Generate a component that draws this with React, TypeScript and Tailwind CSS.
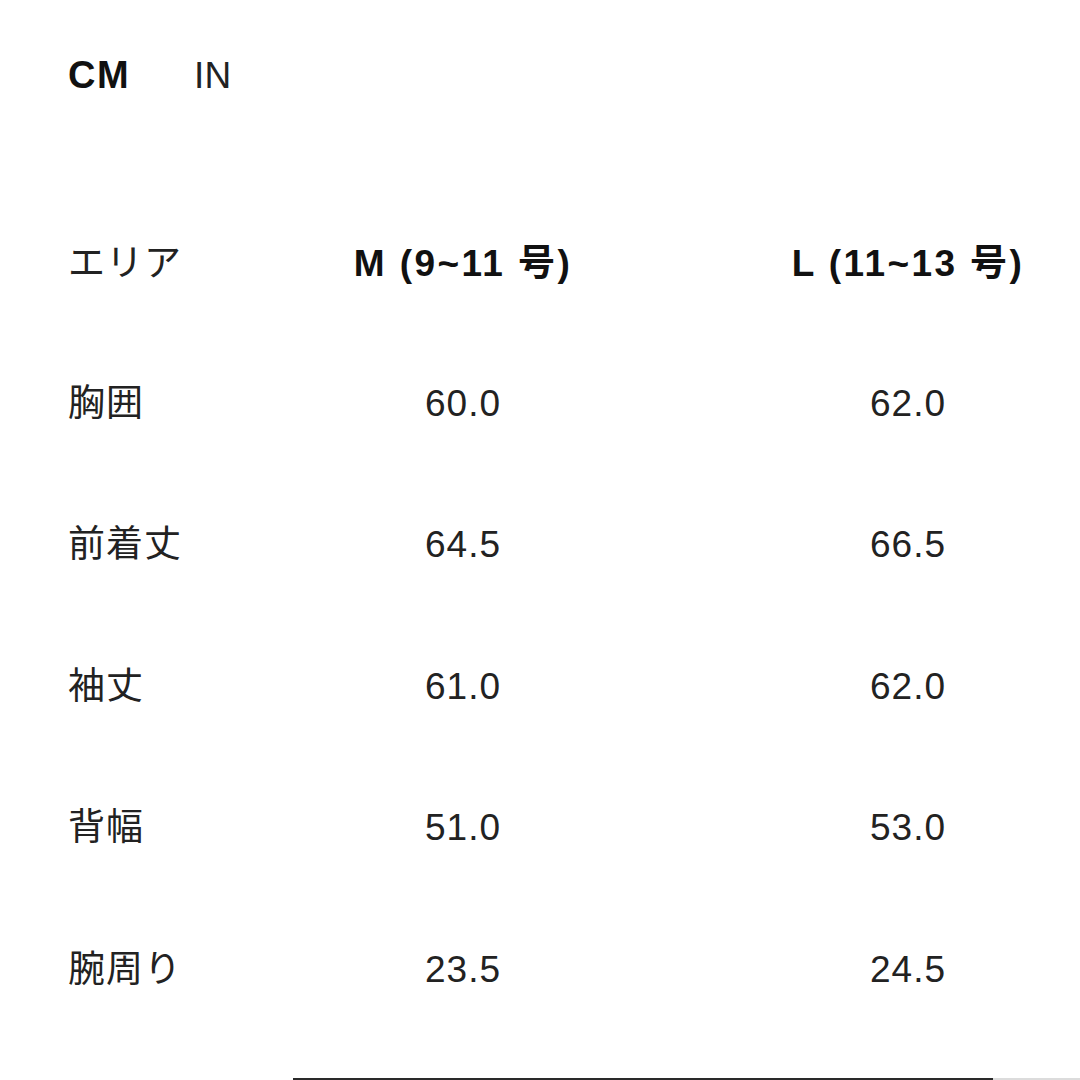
const rows = [
    { label: '胸囲', m: '60.0', l: '62.0' },
    { label: '前着丈', m: '64.5', l: '66.5' },
    { label: '袖丈', m: '61.0', l: '62.0' },
    { label: '背幅', m: '51.0', l: '53.0' },
    { label: '腕周り', m: '23.5', l: '24.5' },
];

export default function App() {
    return (
        <div className="relative h-[1080px] w-[1080px] overflow-hidden bg-white pt-[25px] text-[#111] [font-family:'Liberation_Sans','Noto_Sans_CJK_JP',sans-serif]">
            <div className="flex h-[100px] items-center gap-[64px] pl-[68px] leading-none">
                <span className="text-[38px] font-bold tracking-[1.5px]">CM</span>
                <span className="text-[37px] text-[#222]">IN</span>
            </div>

            <div className="mt-[68.5px]">
                <div className="flex h-[139px] items-center text-[37px] leading-none">
                    <div className="w-[313px] pl-[68px] text-[#222] tracking-[1px]">エリア</div>
                    <div className="w-[300px] text-center font-bold tracking-[2.4px]">M (9~11 号)</div>
                    <div className="ml-[145px] w-[300px] text-center font-bold tracking-[2.4px]">L (11~13 号)</div>
                </div>
                {rows.map((row) => (
                    <div key={row.label} className="flex h-[141.5px] items-center text-[37px] leading-none text-[#222]">
                        <div className="w-[313px] pl-[68px] tracking-[1px]">{row.label}</div>
                        <div className="w-[300px] text-center tracking-[1px]">{row.m}</div>
                        <div className="ml-[145px] w-[300px] text-center tracking-[1px]">{row.l}</div>
                    </div>
                ))}
            </div>

            <div className="absolute bottom-0 left-[293px] right-0 flex">
                <div className="h-[2px] w-[700px] bg-[#2a2a2a]" />
                <div className="mt-auto h-[2px] flex-1 bg-[#dcdcdc]" />
            </div>
        </div>
    );
}
